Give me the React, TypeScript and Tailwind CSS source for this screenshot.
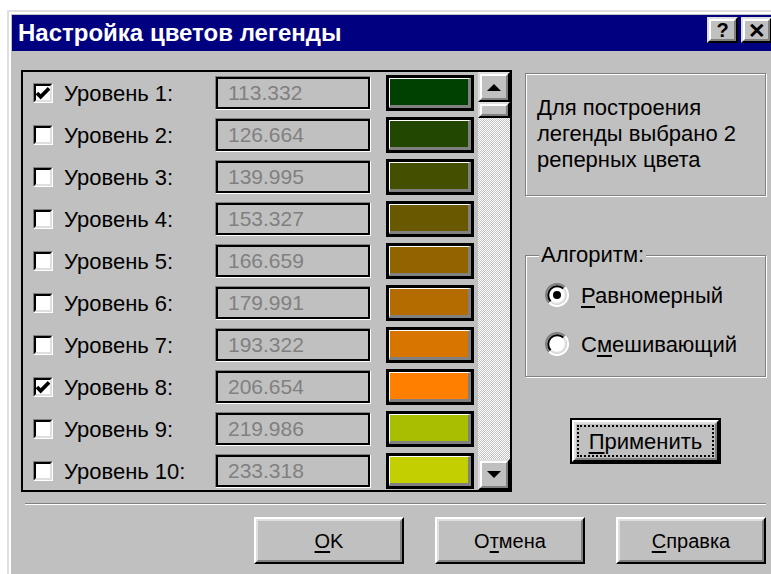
import React from "react";

type Level = { n: number; value: string; swatch: string; checked: boolean };

const levels: Level[] = [
  { n: 1, value: "113.332", swatch: "bg-[#004000]", checked: true },
  { n: 2, value: "126.664", swatch: "bg-[#224700]", checked: false },
  { n: 3, value: "139.995", swatch: "bg-[#454f00]", checked: false },
  { n: 4, value: "153.327", swatch: "bg-[#6a5800]", checked: false },
  { n: 5, value: "166.659", swatch: "bg-[#926400]", checked: false },
  { n: 6, value: "179.991", swatch: "bg-[#b46c00]", checked: false },
  { n: 7, value: "193.322", swatch: "bg-[#d87500]", checked: false },
  { n: 8, value: "206.654", swatch: "bg-[#ff8000]", checked: true },
  { n: 9, value: "219.986", swatch: "bg-[#a8be00]", checked: false },
  { n: 10, value: "233.318", swatch: "bg-[#c4cf00]", checked: false },
];

function CheckBox({ checked }: { checked: boolean }) {
  return (
    <div className="w-[20px] h-[20px] shrink-0 border border-t-[#808080] border-l-[#808080] border-r-white border-b-white">
      <div className="w-full h-full bg-white border-2 border-t-black border-l-black border-r-[#dfdfdf] border-b-[#dfdfdf] flex items-center justify-center">
        {checked && (
          <svg width="15" height="15" viewBox="0 0 15 15">
            <polyline points="1,7 5,11 14,2" fill="none" stroke="black" strokeWidth="4" />
          </svg>
        )}
      </div>
    </div>
  );
}

function Radio({ checked }: { checked: boolean }) {
  return (
    <svg width="24" height="24" viewBox="0 0 24 24" className="shrink-0">
      <circle cx="12" cy="12" r="9" fill="white" />
      <path d="M4.22 19.78 A11 11 0 0 1 19.78 4.22" fill="none" stroke="#808080" strokeWidth="2" />
      <path d="M19.78 4.22 A11 11 0 0 1 4.22 19.78" fill="none" stroke="#ffffff" strokeWidth="2" />
      <path d="M5.64 18.36 A9 9 0 0 1 18.36 5.64" fill="none" stroke="#000000" strokeWidth="2" />
      <path d="M18.36 5.64 A9 9 0 0 1 5.64 18.36" fill="none" stroke="#dfdfdf" strokeWidth="2" />
      {checked && <circle cx="12" cy="12" r="4" fill="black" />}
    </svg>
  );
}

function Raised({ className, children }: { className?: string; children?: React.ReactNode }) {
  return (
    <div className={`border-2 border-t-[#dfdfdf] border-l-[#dfdfdf] border-r-black border-b-black ${className ?? ""}`}>
      <div className="w-full h-full bg-[#c0c0c0] border-2 border-t-white border-l-white border-r-[#808080] border-b-[#808080] flex items-center justify-center">
        {children}
      </div>
    </div>
  );
}

function LevelRow({ level }: { level: Level }) {
  return (
    <div className="h-[42px] shrink-0 flex items-center pl-[10px]">
      <CheckBox checked={level.checked} />
      <div className="w-[162px] pl-[11px] text-[22px] text-black whitespace-nowrap">Уровень {level.n}:</div>
      <div className="w-[156px] h-[34px] border border-t-[#808080] border-l-[#808080] border-r-white border-b-white">
        <div className="w-full h-full border-2 border-black flex items-center pl-[10px] text-[21px] text-[#808080]">
          {level.value}
        </div>
      </div>
      <div className="ml-[15px] w-[88px] h-[36px] border-[3px] border-black">
        <div className="w-full h-full border-t border-l border-white border-r-[3px] border-b-[3px] border-r-[#808080] border-b-[#808080]">
          <div className={`w-full h-full ${level.swatch}`} />
        </div>
      </div>
    </div>
  );
}

function ScrollBar() {
  return (
    <div className="w-[32px] flex flex-col">
      <Raised className="h-[30px] shrink-0">
        <svg width="14" height="7" viewBox="0 0 14 7">
          <polygon points="0,7 14,7 7,0" fill="black" />
        </svg>
      </Raised>
      <Raised className="h-[16px] shrink-0" />
      <div className="flex-1 [background-image:repeating-conic-gradient(#c0c0c0_0%_25%,#ffffff_0%_50%)] [background-size:2px_2px]" />
      <Raised className="h-[31px] shrink-0">
        <svg width="14" height="7" viewBox="0 0 14 7">
          <polygon points="0,0 14,0 7,7" fill="black" />
        </svg>
      </Raised>
    </div>
  );
}

function DialogButton({ children }: { children: React.ReactNode }) {
  return (
    <div className="w-[150px] h-[47px] border-2 border-t-white border-l-white border-r-black border-b-black">
      <div className="w-full h-full border-2 border-t-[#dfdfdf] border-l-[#dfdfdf] border-r-[#808080] border-b-[#808080] flex items-center justify-center text-[20px] text-black">
        {children}
      </div>
    </div>
  );
}

export default function App() {
  return (
    <div className="w-[771px] h-[574px] overflow-hidden bg-white pl-[7px] pt-[10px] font-['Liberation_Sans',Arial,sans-serif]">
      <div className="w-[774px] h-[600px] bg-[#c0c0c0] border-t-2 border-l-2 border-[#dfdfdf]">
        <div className="h-full border-t-2 border-l-2 border-white pt-[1px] pl-[1px] pr-[5px]">
          {/* caption */}
          <div className="h-[36px] bg-[#000080] flex justify-between pl-[6px] pr-[4px]">
            <div className="self-center text-white font-bold text-[24px] leading-none whitespace-nowrap">
              Настройка цветов легенды
            </div>
            <div className="flex gap-[3px] mt-[2px]">
              <Raised className="w-[31px] h-[26px]">
                <span className="font-bold text-[20px] leading-none text-black">?</span>
              </Raised>
              <Raised className="w-[31px] h-[26px]">
                <span className="font-bold text-[21px] leading-none text-black">✕</span>
              </Raised>
            </div>
          </div>

          {/* body */}
          <div className="pt-[19px] pl-[9px] pr-[10px]">
            <div className="flex gap-[13px]">
              <div className="w-[491px] h-[422px] border-2 border-black flex">
                <div className="w-[455px] flex flex-col overflow-hidden">
                  {levels.map((l) => (
                    <LevelRow key={l.n} level={l} />
                  ))}
                </div>
                <ScrollBar />
              </div>

              <div className="w-[241px] flex flex-col">
                <div className="mt-[3px] h-[123px] border border-[#808080] shadow-[inset_1px_1px_0_#fff,1px_1px_0_#fff] pt-[21px] pl-[11px] text-[22px] leading-[26px] text-black">
                  <div>Для построения</div>
                  <div>легенды выбрано 2</div>
                  <div>реперных цвета</div>
                </div>

                <div className="relative mt-[59px] h-[122px] border border-[#808080] shadow-[inset_1px_1px_0_#fff,1px_1px_0_#fff] pt-[25px] pl-[19px] flex flex-col gap-[21px]">
                  <div className="absolute left-[13px] -top-[13px] px-[2px] bg-[#c0c0c0] text-[22px] leading-[24px] text-black">
                    Алгоритм:
                  </div>
                  <div className="h-[28px] flex items-center gap-[12px] text-[22px] text-black">
                    <Radio checked />
                    <span>
                      <span className="underline underline-offset-[3px]">Р</span>авномерный
                    </span>
                  </div>
                  <div className="h-[28px] flex items-center gap-[12px] text-[22px] text-black">
                    <Radio checked={false} />
                    <span>
                      С<span className="underline underline-offset-[3px]">м</span>ешивающий
                    </span>
                  </div>
                </div>

                <div className="self-center mt-[41px] w-[151px] h-[46px] border-2 border-black">
                  <div className="w-full h-full border-2 border-t-white border-l-white border-r-black border-b-black">
                    <div className="w-full h-full border-2 border-t-[#dfdfdf] border-l-[#dfdfdf] border-r-[#808080] border-b-[#808080] p-[1px]">
                      <div className="w-full h-full border-2 border-dotted border-black flex items-center justify-center text-[22px] text-black">
                        <span>
                          <span className="underline underline-offset-[3px]">П</span>рименить
                        </span>
                      </div>
                    </div>
                  </div>
                </div>
              </div>
            </div>

            <div className="mt-[11px] ml-[4px] h-[2px] border-t border-t-[#808080] border-b border-b-white" />

            <div className="mt-[12px] flex justify-end gap-[31px]">
              <DialogButton>
                <span>
                  <span className="underline underline-offset-[3px]">О</span>K
                </span>
              </DialogButton>
              <DialogButton>
                <span>
                  О<span className="underline underline-offset-[3px]">т</span>мена
                </span>
              </DialogButton>
              <DialogButton>
                <span>
                  <span className="underline underline-offset-[3px]">С</span>правка
                </span>
              </DialogButton>
            </div>
          </div>
        </div>
      </div>
    </div>
  );
}
